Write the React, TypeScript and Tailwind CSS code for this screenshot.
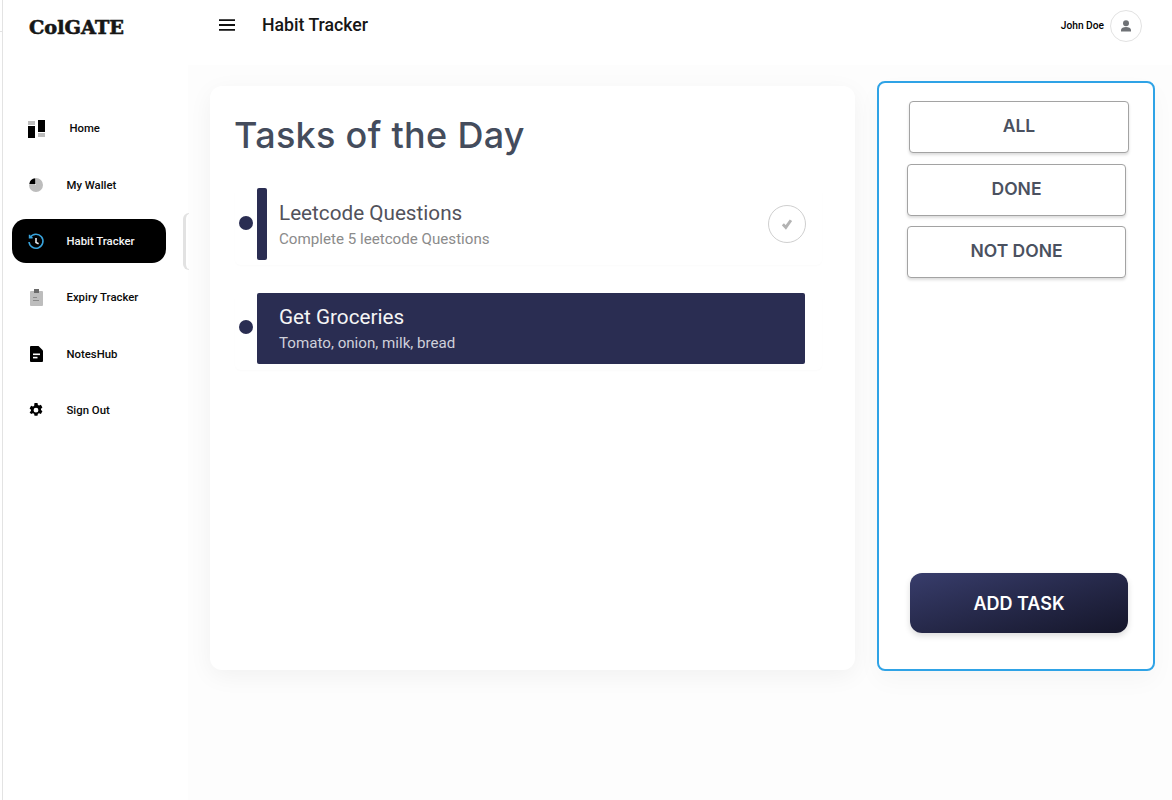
import React from "react";

const roboto = { fontFamily: "Roboto, sans-serif" };

function HomeIcon() {
  return (
    <svg className="ml-[2px]" width="18" height="18" viewBox="0 0 18 18">
      <rect x="0" y="1" width="7" height="4" fill="#bdbdbd" />
      <rect x="0" y="6" width="7" height="12" fill="#000" />
      <rect x="10" y="0" width="7" height="12" fill="#000" />
      <rect x="10" y="13" width="7" height="4" fill="#bdbdbd" />
    </svg>
  );
}
function WalletIcon() {
  return (
    <svg width="14" height="14" viewBox="0 0 14 14">
      <path d="M7 0A7 7 0 1 1 0 7H7Z" fill="#bdbdbd" />
      <path d="M6.4 0.2A7 7 0 0 0 0.2 6.2H6.4Z" fill="#000" />
    </svg>
  );
}
function HistoryIcon() {
  return (
    <svg width="18" height="18" viewBox="0 0 18 18" fill="none" stroke="#38a3dc" strokeWidth="1.6">
      <path d="M3.2 4.2A7 7 0 1 1 2 9" />
      <path d="M2.6 1.8V4.8H5.6" />
      <path d="M9 5V9.4L11.6 10.8" stroke="#e5e7eb" />
    </svg>
  );
}
function ClipIcon() {
  return (
    <svg className="ml-[1px]" width="13" height="17" viewBox="0 0 13 17">
      <rect x="0" y="2" width="13" height="15" rx="1" fill="#bdbdbd" />
      <rect x="4" y="0" width="5" height="4" fill="#6b6b6b" />
      <rect x="3" y="8" width="4" height="1" fill="#8a8a8a" />
      <rect x="3" y="11" width="6" height="1" fill="#8a8a8a" />
    </svg>
  );
}
function NoteIcon() {
  return (
    <svg className="ml-[1px]" width="13" height="16" viewBox="0 0 13 16">
      <path d="M1 0H8.5L13 4.5V15a1 1 0 0 1-1 1H1a1 1 0 0 1-1-1V1a1 1 0 0 1 1-1Z" fill="#000" />
      <rect x="3" y="7.5" width="7" height="1.6" fill="#fff" />
      <rect x="3" y="10.8" width="4.5" height="1.6" fill="#fff" />
    </svg>
  );
}
function GearIcon() {
  return (
    <svg className="ml-[1px]" width="14" height="14" viewBox="0 0 14 14">
      <path
        fillRule="evenodd"
        d="M5.5 0h3l.4 1.9 1.2.6 1.8-.7 1.5 2.6-1.4 1.3v1.3l1.4 1.3-1.5 2.6-1.8-.7-1.2.6-.4 1.9h-3l-.4-1.9-1.2-.6-1.8.7L.6 9.3 2 8V6.7L.6 5.4l1.5-2.6 1.8.7 1.2-.6ZM7 4.8a2.4 2.4 0 1 0 0 4.8 2.4 2.4 0 0 0 0-4.8Z"
        fill="#000"
      />
    </svg>
  );
}

function NavItem({ icon, label, active, textClass }: { icon: React.ReactNode; label: string; active?: boolean; textClass: string }) {
  return (
    <div className={`relative flex h-11 items-center rounded-[14px] ml-[9px] w-[154px] pt-[2px] ${active ? "bg-black text-[#f3f4f6]" : "text-[#0a0a0a]"}`}>
      <div className="flex w-[47px] justify-center">{icon}</div>
      <span className={`text-[11.35px] font-medium ${textClass}`}>{label}</span>
      {active && <div className="absolute left-[171px] top-[-6px] h-[57px] w-[6px] rounded-l-[6px] border-l-[3px] border-y border-[#e2e2e2]" />}
    </div>
  );
}

function FilterButton({ label, className }: { label: string; className: string }) {
  return (
    <div className={`flex h-[52px] items-center justify-center rounded-[4px] border border-[#a3a3a3] bg-white pb-[2px] text-[17.5px] font-semibold text-[#4a5160] shadow-[0_2px_3px_rgba(0,0,0,0.14)] ${className}`} style={{ fontFamily: "Inter, sans-serif" }}>
      {label}
    </div>
  );
}

export default function App() {
  return (
    <div className="flex h-[800px] w-[1172px] overflow-hidden bg-white" style={roboto}>
      <div className="w-[2px] shrink-0 pt-[31px]">
        <div className="h-px bg-[#e3e3e3]" />
      </div>
      <div className="flex h-full w-[186px] shrink-0 flex-col border-l border-[#e3e3e3]">
        <div className="flex h-[54px] items-center pl-[26px] pt-[2px] text-[19.3px] font-black leading-none text-[#161616] [-webkit-text-stroke:0.6px_#161616]" style={{ fontFamily: "'DejaVu Serif', serif" }}>
          ColGATE
        </div>
        <nav className="mt-[52px] flex flex-col gap-[12.3px]">
          <NavItem icon={<HomeIcon />} label="Home" textClass="ml-[10.5px]" />
          <NavItem icon={<WalletIcon />} label="My Wallet" textClass="ml-[7.5px]" />
          <NavItem icon={<HistoryIcon />} label="Habit Tracker" active textClass="ml-[7.5px]" />
          <NavItem icon={<ClipIcon />} label="Expiry Tracker" textClass="ml-[7.5px]" />
          <NavItem icon={<NoteIcon />} label="NotesHub" textClass="ml-[7.5px]" />
          <NavItem icon={<GearIcon />} label="Sign Out" textClass="ml-[7.5px]" />
        </nav>
      </div>

      <div className="flex min-w-0 flex-1 flex-col">
        <header className="flex h-[65px] shrink-0 items-start pt-[10px] pl-[31px] pr-[30px]">
          <div className="flex h-[30px] items-center">
            <svg width="16" height="12" viewBox="0 0 16 12" fill="none" stroke="#111" strokeWidth="1.8">
              <path d="M0 1.2H16M0 6H16M0 10.8H16" />
            </svg>
            <span className="ml-[27px] text-[17.7px] font-medium text-[#161616]">Habit Tracker</span>
          </div>
          <div className="ml-auto flex h-[30px] items-center pt-[1px]">
            <span className="text-[10.2px] font-medium text-black">John Doe</span>
            <div className="ml-[6px] flex h-8 w-8 items-center justify-center rounded-full border border-[#e2e2e2] bg-white">
              <svg width="12" height="12" viewBox="0 0 12 12" fill="#6f7276">
                <circle cx="6" cy="3.2" r="3" />
                <path d="M1 11.5V10c0-2 2.4-3 5-3s5 1 5 3v1.5Z" />
              </svg>
            </div>
          </div>
        </header>

        <main className="flex flex-1 items-start bg-[#fdfdfd] pl-[22px] pt-[16px]">
          <section className="mt-[5px] h-[584px] w-[645px] shrink-0 rounded-[12px] bg-white pl-[25px] pt-[25px] shadow-[0_6px_24px_rgba(0,0,0,0.05)]">
            <h1 className="-ml-[1px] text-[36px] font-medium leading-[48px] tracking-[0.3px] text-[#444c5c]" style={{ fontFamily: "Inter, sans-serif" }}>
              Tasks of the Day
            </h1>
            <div className="mt-[28px] w-[587px]">
              <div className="flex h-[78px] items-start rounded-[6px] pt-[1px] shadow-[0_1px_2px_rgba(0,0,0,0.02)]">
                <div className="mt-[28px] ml-[4px] h-[14px] w-[14px] rounded-full bg-[#2a2d52]" />
                <div className="ml-[4px] h-[72px] w-[10px] rounded-[2px] bg-[#2a2d52]" />
                <div className="ml-[12px] mt-[12px]">
                  <div className="text-[20.7px] leading-[26px] text-[#52525b]">Leetcode Questions</div>
                  <div className="mt-[3px] text-[15.15px] leading-[20px] text-[#8b8b8b]">Complete 5 leetcode Questions</div>
                </div>
                <div className="ml-auto mr-[16px] mt-[17px] flex h-[38px] w-[38px] items-center justify-center rounded-full border border-[#cfcfcf]">
                  <svg width="12" height="12" viewBox="0 0 14 14" fill="none" stroke="#b3b3b3" strokeWidth="3.4">
                    <path d="M2.2 7.4L5.6 11L11.6 2.6" />
                  </svg>
                </div>
              </div>
              <div className="mt-[28px] flex h-[77px] items-start rounded-[6px] shadow-[0_1px_2px_rgba(0,0,0,0.02)]">
                <div className="mt-[27px] ml-[4px] h-[14px] w-[14px] rounded-full bg-[#2a2d52]" />
                <div className="ml-[4px] h-[71px] w-[548px] rounded-[2px] bg-[#2a2d52] pl-[22px] pt-[11px]">
                  <div className="text-[20.7px] leading-[26px] text-[#f5f5f5]">Get Groceries</div>
                  <div className="mt-[3px] text-[15.15px] leading-[20px] text-[#cfd0da]">Tomato, onion, milk, bread</div>
                </div>
              </div>
            </div>
          </section>

          <aside className="ml-[22px] flex h-[590px] w-[278px] shrink-0 flex-col rounded-[8px] border-2 border-[#2fa3e6] bg-white pb-[36px] pt-[18px] shadow-[0_10px_24px_rgba(0,0,0,0.03)]">
            <FilterButton label="ALL" className="ml-[30px] w-[220px]" />
            <FilterButton label="DONE" className="ml-[28px] mt-[11px] w-[219px]" />
            <FilterButton label="NOT DONE" className="ml-[28px] mt-[10px] w-[219px]" />
            <div className="ml-[31px] mt-auto flex h-[60px] w-[218px] items-center justify-center rounded-[12px] bg-gradient-to-br from-[#383d6c] to-[#15162a] pt-[1px] text-[18px] font-semibold text-white shadow-[0_3px_6px_rgba(0,0,0,0.14)]" style={{ fontFamily: "Inter, sans-serif" }}>
              ADD TASK
            </div>
          </aside>
        </main>
      </div>
    </div>
  );
}
